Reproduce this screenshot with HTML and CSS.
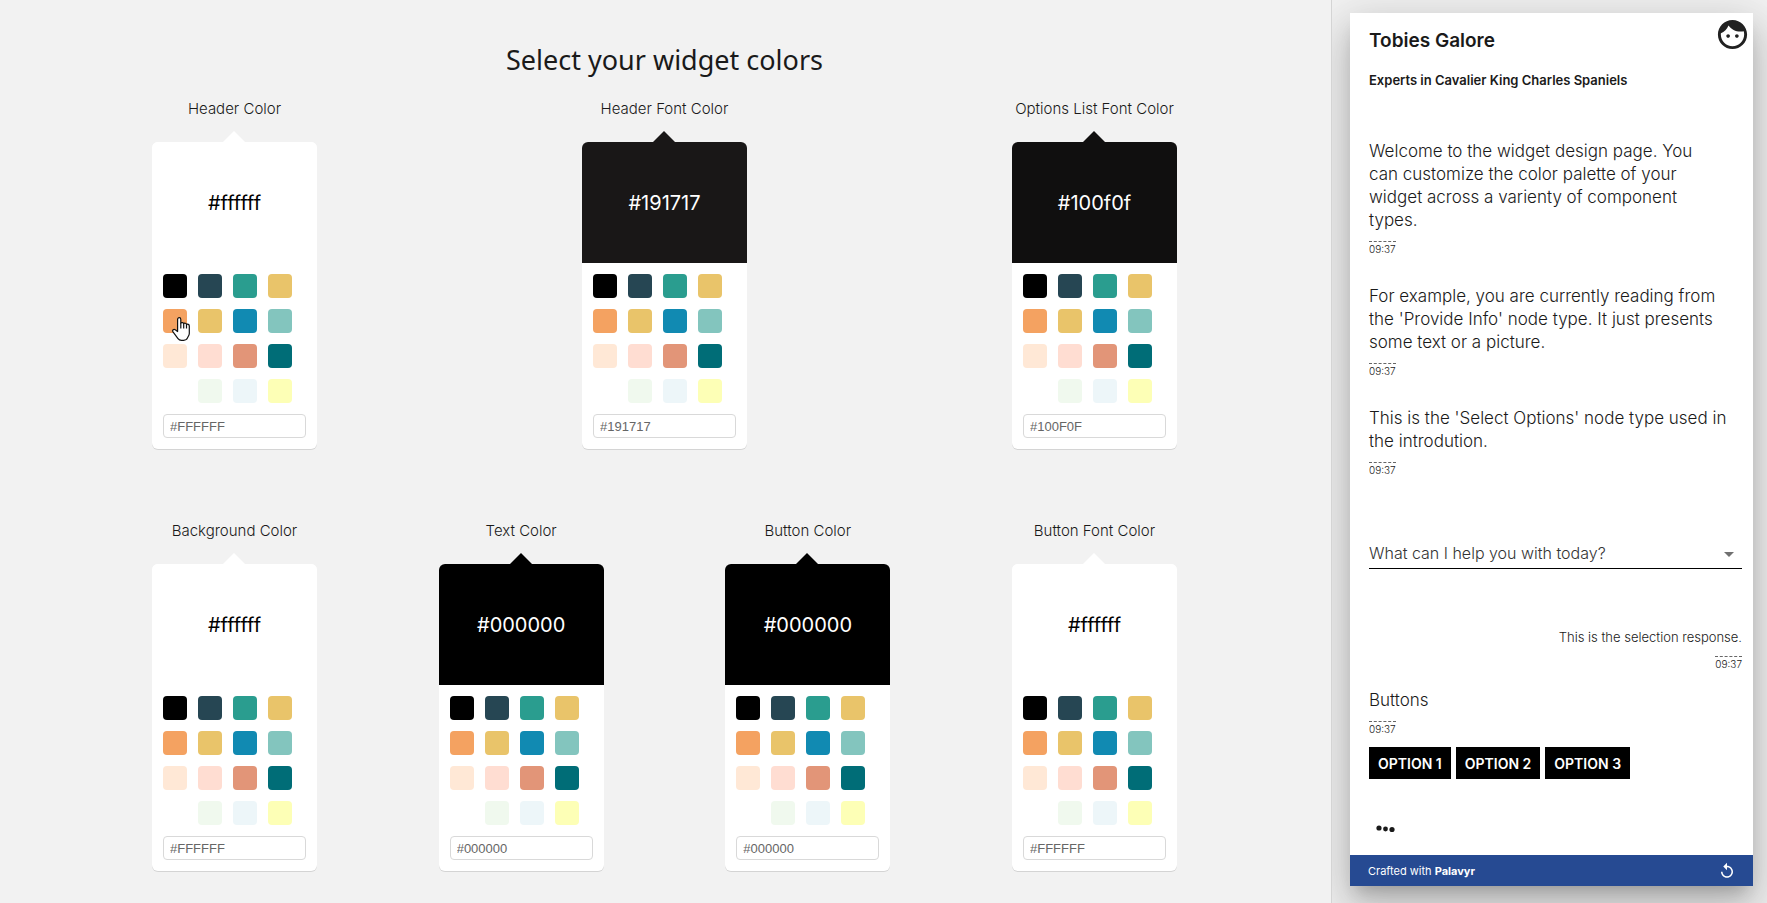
FILE: index.html
```html
<!DOCTYPE html>
<html lang="en">
<head>
<meta charset="utf-8">
<title>Widget colors</title>
<link rel="stylesheet" href="styles.css">
</head>
<body>
<div class="app">
  <main class="designer">
    <h1 class="designer-title">Select your widget colors</h1>
    <div class="picker-row" id="row-top"></div>
    <div class="picker-row" id="row-bottom"></div>
  </main>
  <aside class="drawer">
    <section class="widget">
      <header class="widget-header">
        <div>
          <h2 class="widget-title">Tobies Galore</h2>
          <p class="widget-subtitle">Experts in Cavalier King Charles Spaniels</p>
        </div>
        <svg class="face" viewBox="0 0 24 24" aria-hidden="true"><path d="M9 11.75c-.69 0-1.25.56-1.25 1.25s.56 1.25 1.25 1.25 1.25-.56 1.25-1.25-.56-1.25-1.25-1.25zm6 0c-.69 0-1.25.56-1.25 1.25s.56 1.25 1.25 1.25 1.25-.56 1.25-1.25-.56-1.25-1.25-1.25zM12 2C6.48 2 2 6.48 2 12s4.48 10 10 10 10-4.48 10-10S17.52 2 12 2zm0 18c-4.41 0-8-3.59-8-8 0-.29.02-.58.05-.86 2.36-1.05 4.23-2.98 5.21-5.37C11.07 8.33 14.05 10 17.42 10c.78 0 1.53-.09 2.25-.26.21.71.33 1.47.33 2.26 0 4.41-3.59 8-8 8z"/></svg>
      </header>
      <div class="chat">
        <div class="message">
          <p class="message-text">Welcome to the widget design page. You<br>can customize the color palette of your<br>widget across a varienty of component<br>types.</p>
          <time class="stamp">09:37</time>
        </div>
        <div class="message">
          <p class="message-text">For example, you are currently reading from the 'Provide Info' node type. It just presents some text or a picture.</p>
          <time class="stamp">09:37</time>
        </div>
        <div class="message">
          <p class="message-text">This is the 'Select Options' node type used in the introdution.</p>
          <time class="stamp">09:37</time>
        </div>
        <div class="select-wrap">
          <select class="select" aria-label="What can I help you with today?">
            <option>What can I help you with today?</option>
          </select>
          <svg class="caret" viewBox="0 0 10 5" aria-hidden="true"><path d="M0 0h10L5 5z"/></svg>
        </div>
        <div class="message reply">
          <p class="reply-text">This is the selection response.</p>
          <time class="stamp">09:37</time>
        </div>
        <div class="message buttons-message">
          <p class="message-text">Buttons</p>
          <time class="stamp">09:37</time>
        </div>
        <div class="options">
          <button class="option" type="button">OPTION 1</button>
          <button class="option" type="button">OPTION 2</button>
          <button class="option" type="button">OPTION 3</button>
        </div>
        <svg class="typing" viewBox="0 0 20 8" aria-hidden="true"><circle cx="3" cy="3" r="2.6"/><circle cx="9.500" cy="4" r="2.400"/><circle cx="16" cy="4.500" r="2.600"/></svg>
      </div>
      <footer class="widget-footer">
        <span>Crafted with <b class="brand">Palavyr</b></span>
        <button class="replay" type="button" aria-label="Restart"><svg class="replay-icon" viewBox="0 0 24 24" aria-hidden="true"><path d="M12 5V1L7 6l5 5V7c3.310 0 6 2.690 6 6s-2.690 6-6 6-6-2.690-6-6H4c0 4.420 3.580 8 8 8s8-3.580 8-8-3.580-8-8-8z"/></svg></button>
      </footer>
    </section>
  </aside>
</div>
<script src="script.js"></script>
</body>
</html>
```
FILE: styles.css
```css
* { box-sizing: border-box; }

body {
  margin: 0;
  background: #f2f2f2;
  color: #1a1a1a;
  font-family: Inter, "Open Sans", sans-serif;
}

h1, h2, p { margin: 0; }

button { font-family: inherit; border: 0; padding: 0; cursor: pointer; }

.app { display: flex; min-height: 100vh; }

/* Color pickers */

.designer { flex: 1; padding: 40px 154px 24px 152px; }

.designer-title {
  font: 400 27px/40px "Noto Sans", sans-serif;
  text-align: center;
}

.picker-row { display: flex; justify-content: space-between; margin-top: 19px; }

.picker-row + .picker-row { margin-top: 72px; }

.picker { width: 165px; }

.picker-label {
  display: flex;
  justify-content: center;
  font-size: 15px;
  font-weight: 300;
  line-height: 20px;
  white-space: nowrap;
}

.card {
  position: relative;
  margin-top: 23px;
  border-radius: 6px;
  background: #fff;
  box-shadow: 0 1px rgba(0, 0, 0, .12);
}

.card::before {
  content: "";
  position: absolute;
  top: -11px;
  left: 71px;
  border: 11px solid transparent;
  border-top: 0;
  border-bottom-color: var(--picked);
}

.preview {
  display: flex;
  align-items: center;
  justify-content: center;
  height: 121px;
  border-radius: 6px 6px 0 0;
  background: var(--picked);
  color: var(--ink);
  font-size: 20px;
}

.card-body { padding: 11px; }

.swatches { display: grid; grid-template-columns: repeat(4, 24px); gap: 11px; }

.swatch { position: relative; height: 24px; border-radius: 4px; }

.pointer { position: absolute; top: 8px; left: 9px; width: 18px; height: 24px; z-index: 1; }

.hex {
  display: block;
  width: 100%;
  height: 24px;
  margin-top: 11px;
  padding: 0 6px;
  border: 1px solid #d9d9d9;
  border-radius: 4px;
  background: #fff;
  color: #666;
  font: 13px "Liberation Sans", Arial, sans-serif;
}

/* Widget preview */

.drawer {
  display: flex;
  width: 436px;
  padding: 13px 14px 17px 18px;
  border-left: 1px solid #d4d4d4;
  overflow: hidden;
}

.widget {
  display: flex;
  flex: 1;
  flex-direction: column;
  background: #fff;
  box-shadow: 0 11px 15px -7px rgba(0, 0, 0, .2), 0 24px 38px 3px rgba(0, 0, 0, .14), 0 9px 46px 8px rgba(0, 0, 0, .12);
}

.widget-header { display: flex; justify-content: space-between; padding: 4px 3px 0 19px; }

.widget-title { margin-top: 10px; font-size: 19px; font-weight: 600; line-height: 28px; }

.widget-subtitle { margin-top: 15px; font-size: 13px; font-weight: 600; line-height: 20px; }

.face { width: 35px; height: 35px; fill: #212121; }

.chat { flex: 1; padding: 50px 11px 0 19px; }

.message { margin-bottom: 29px; }

.message-text { font-size: 17px; font-weight: 300; line-height: 23px; }

.stamp {
  display: table;
  margin-top: 9px;
  border-top: 1px dashed #666;
  font-size: 10px;
  font-weight: 300;
  line-height: 14px;
}

.select-wrap { position: relative; margin-top: 61px; }

.select {
  appearance: none;
  display: block;
  width: 100%;
  height: 31px;
  padding: 0;
  border: 0;
  border-bottom: 1px solid #000;
  border-radius: 0;
  background: transparent;
  color: #333;
  font: 300 16px/20px Inter, "Open Sans", sans-serif;
}

.caret { position: absolute; top: 14px; right: 8px; width: 10px; height: 5px; fill: #707070; }

.reply {
  display: flex;
  flex-direction: column;
  align-items: flex-end;
  margin: 58px 0 18px;
}

.reply-text { font-size: 13px; font-weight: 300; line-height: 20px; }

.reply .stamp { display: block; }

.buttons-message { margin-bottom: 11px; }

.options { display: flex; gap: 5px; }

.option {
  height: 32px;
  padding: 0 9px;
  background: #000;
  color: #fff;
  font-size: 14px;
  font-weight: 600;
}

.typing { display: block; width: 20px; height: 8px; margin: 46px 0 12px 7px; fill: #1a1a1a; }

.widget-footer {
  display: flex;
  align-items: center;
  justify-content: space-between;
  height: 31px;
  padding: 0 17px 0 18px;
  background: #264a92;
  color: #fff;
  font-size: 11px;
}

.brand { font-weight: 700; }

.replay { display: flex; background: transparent; }

.replay-icon { width: 18px; height: 18px; fill: #fff; }
```
FILE: script.js
```js
const palette = [
  "#000000", "#264653", "#2a9d8f", "#e9c46a",
  "#f4a261", "#e9c46a", "#118ab2", "#83c5be",
  "#ffe8d6", "#ffddd2", "#e29578", "#006d77",
  "#ffffff", "#f0f9ee", "#edf6f9", "#fdffb6"
];

const rows = {
  "row-top": [
    ["Header Color", "#ffffff"],
    ["Header Font Color", "#191717"],
    ["Options List Font Color", "#100f0f"]
  ],
  "row-bottom": [
    ["Background Color", "#ffffff"],
    ["Text Color", "#000000"],
    ["Button Color", "#000000"],
    ["Button Font Color", "#ffffff"]
  ]
};

const hand = `<svg class="pointer" viewBox="0 0 18 24" aria-hidden="true"><path fill="#fff" stroke="#111" stroke-width="1.2" stroke-linejoin="round" d="M5.600 14.500V2.400c0-2.300 3.200-2.300 3.200 0v3.700c.8-1 2.600-.6 2.900.5.900-.8 2.500-.4 2.800.8 1.100-.6 2.800 0 2.800 1.500v7.600c0 2-1.300 3-1.800 4.400-.5 1.400-2 2.400-3.900 2.400H9.400c-1.500 0-2.600-.6-3.400-1.700L1 14.800c-1.100-1.600.8-3.200 2.300-2z"/><path fill="none" stroke="#111" stroke-width="1.200" d="M8.800 6v5.500M11.700 6.600v4.900M14.500 7.400v4.100"/></svg>`;

for (const [rowId, pickers] of Object.entries(rows)) {
  document.getElementById(rowId).innerHTML = pickers.map(([label, color], n) => {
    const id = `${rowId}-${n}`;
    const ink = color === "#ffffff" ? "#000" : "#fff";
    const swatches = palette.map((c, i) => {
      const hovered = rowId === "row-top" && n === 0 && i === 4;
      return `<button class="swatch" type="button" aria-label="${c}" style="background:${c}">${hovered ? hand : ""}</button>`;
    }).join("");
    return `<div class="picker">
      <label class="picker-label" for="${id}">${label}</label>
      <div class="card" style="--picked:${color};--ink:${ink}">
        <div class="preview">${color}</div>
        <div class="card-body">
          <div class="swatches">${swatches}</div>
          <input class="hex" id="${id}" type="text" value="${color.toUpperCase()}">
        </div>
      </div>
    </div>`;
  }).join("");
}
```
